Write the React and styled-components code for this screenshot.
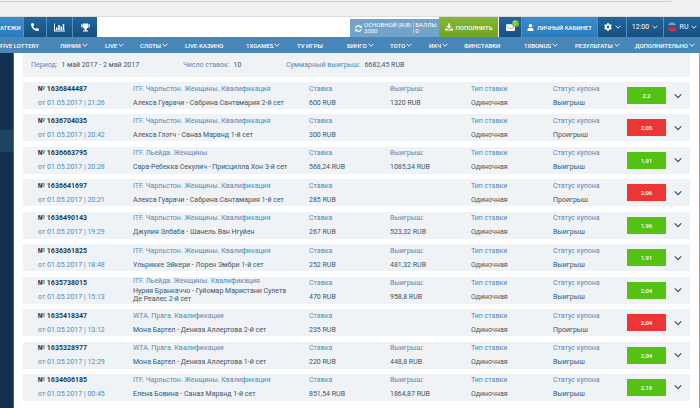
import React from "react";
import styled, { createGlobalStyle } from "styled-components";
import {
  FaPhoneAlt,
  FaTrophy,
  FaUser,
  FaCog,
  FaEnvelope,
  FaSyncAlt,
} from "react-icons/fa";

const GlobalStyle = createGlobalStyle`
  * {
    box-sizing: border-box;
  }
  body {
    margin: 0;
    background: #fff;
    color: #3a5064;
    font-family: Roboto, "Liberation Sans", sans-serif;
    font-size: 7px;
  }
  button {
    margin: 0;
    border: 0;
    padding: 0;
    background: none;
    color: inherit;
    font: inherit;
    cursor: pointer;
  }
  a {
    color: inherit;
    text-decoration: none;
  }
  svg {
    flex-shrink: 0;
  }
`;

const Page = styled.div`
  display: flex;
  flex-direction: column;
  min-height: 100vh;
  overflow: hidden;
`;

const BrowserStrip = styled.div`
  height: 17px;
  background: #f1f1f1;
  border-bottom: 1px solid #dcdcdc;
`;
const AddressEdge = styled.div`
  width: 96%;
  height: 2px;
  border-bottom: 1px solid #d2d2d2;
  border-right: 1px solid #d2d2d2;
  border-radius: 0 0 2px 0;
`;

const Header = styled.header`
  display: flex;
  justify-content: space-between;
  height: 20px;
  color: #fff;
`;
const HeaderGroup = styled.div`
  display: flex;
  align-items: stretch;
`;
const HeaderButton = styled.button`
  display: flex;
  align-items: center;
  justify-content: ${(props) => (props.$start ? "flex-start" : "center")};
  gap: 3px;
  width: ${(props) => props.$width}px;
  white-space: nowrap;
  border-right: 1px solid #5590bd;
  background: ${(props) =>
    props.$light
      ? "linear-gradient(#3a8fd0, #2a7bba)"
      : "linear-gradient(#20679f, #174f7f)"};
  &:last-child {
    border-right: 0;
  }
`;
const SmallCaps = styled.span`
  font-size: 6px;
  font-weight: 500;
`;
const MailBox = styled.span`
  position: relative;
  display: flex;
`;
const MailCount = styled.span`
  position: absolute;
  top: -3px;
  right: -4px;
  width: 7px;
  height: 7px;
  border-radius: 50%;
  background: #7cb82f;
  font-size: 5px;
  line-height: 7px;
  text-align: center;
`;
const Balance = styled.div`
  display: flex;
  align-items: center;
  gap: 2px;
  width: 89px;
  margin-top: 2px;
  padding-left: 5px;
  background: #72a3ca;
  font-size: 6px;
  line-height: 6px;
  white-space: nowrap;
`;
const BalanceItem = styled.div`
  & + & {
    padding-left: 1px;
    border-left: 1px solid #a5c5df;
  }
`;
const Currency = styled.span`
  font-size: 5px;
`;
const TopUp = styled(HeaderButton)`
  background: linear-gradient(#86b833, #6fa426);
  border-right: 1px solid #fff;
`;

const Nav = styled.nav`
  display: grid;
  grid-template-columns: 60fr 45fr 35fr 45fr 61fr 51fr 50fr 43fr 39fr 35fr 60fr 51fr 60fr 65fr;
  align-items: center;
  height: 16px;
  background: #4987b8;
  color: #fff;
`;
const NavLink = styled.a`
  display: flex;
  align-items: center;
  gap: 1px;
  min-width: 0;
  font-weight: 500;
  font-size: 6px;
  white-space: nowrap;
`;

const Body = styled.div`
  display: flex;
  flex: 1;
`;
const Sidebar = styled.aside`
  width: 14px;
  padding-top: 77px;
  background: #10324f;
  border-right: 1px solid #4a6783;
`;
const SidebarItem = styled.div`
  height: 22px;
  background: #1c4462;
`;
const Main = styled.main`
  display: flex;
  flex: 1;
  flex-direction: column;
  gap: 5px;
  min-width: 0;
  padding: 0 9px 7px 9px;
  border-right: 1px solid #8fa3ba;
`;

const Summary = styled.div`
  display: grid;
  grid-template-columns: 152fr 103fr 404fr;
  align-items: center;
  height: 24px;
  padding-left: 8px;
  background: #eff3f6;
`;
const SummaryItem = styled.div`
  display: flex;
  align-items: baseline;
  gap: 4px;
`;
const Label = styled.span`
  color: #5488b8;
  line-height: 9px;
`;
const Value = styled.span`
  color: #3d5366;
  line-height: 8px;
`;

const CouponList = styled.ul`
  display: flex;
  flex: 1;
  flex-direction: column;
  justify-content: space-between;
  margin: 0;
  padding: 0;
  list-style: none;
`;
const Coupon = styled.li`
  display: grid;
  grid-template-columns: 95fr 176fr 81fr 81fr 82fr 74fr 39fr 24fr;
  align-items: center;
  min-height: 27px;
  padding-left: 15px;
  background: #eff3f6;
`;
const Cell = styled.div`
  display: flex;
  flex-direction: column;
  justify-content: space-around;
  align-self: stretch;
  min-width: 0;
  padding-right: ${(props) => (props.$event ? 16 : 0)}px;
`;
const CouponNumber = styled.strong`
  color: #1d3d57;
  font-weight: 700;
  line-height: 9px;
`;
const CouponDate = styled.time`
  color: #5488b8;
  line-height: 8px;
`;
const Odds = styled.div`
  height: 17px;
  background: ${(props) => (props.$won ? "#55c113" : "#ee3535")};
  color: #fff;
  font-size: 6px;
  font-weight: 500;
  line-height: 17px;
  text-align: center;
`;
const Expand = styled.button`
  display: flex;
  align-items: center;
  justify-content: center;
  color: #2d5273;
`;

function Chevron({ size = 6 }) {
  return (
    <svg width={size} height={size} viewBox="0 0 10 10" fill="none" aria-hidden="true">
      <path d="M1 3l4 4 4-4" stroke="currentColor" strokeWidth="1.5" />
    </svg>
  );
}

function ChartIcon() {
  return (
    <svg width="11" height="9" viewBox="0 0 22 18" fill="currentColor" aria-hidden="true">
      <path d="M0 1h2v14h20v2H0z" />
      <path d="M4 9h3v5H4zM8.500 4h3v10h-3zM13 7h3v7h-3zM17.500 2h3v12h-3z" />
    </svg>
  );
}

function DownloadIcon() {
  return (
    <svg width="8" height="8" viewBox="0 0 16 16" fill="currentColor" aria-hidden="true">
      <path d="M6 1h4v5h3.500L8 11.500 2.500 6H6z" />
      <path d="M0 11h4l4 3 4-3h4v4H0z" />
    </svg>
  );
}

function RussianFlag() {
  return (
    <svg width="10" height="10" viewBox="0 0 18 18" aria-hidden="true">
      <clipPath id="flag">
        <circle cx="9" cy="9" r="8" />
      </clipPath>
      <g clipPath="url(#flag)">
        <rect width="18" height="6" fill="#8c9fb3" />
        <rect y="6" width="18" height="6" fill="#2356a8" />
        <rect y="11" width="18" height="7" fill="#e02d33" />
      </g>
    </svg>
  );
}

const navLinks = [
  { title: "FIVE LOTTERY" },
  { title: "ЛИНИЯ", menu: true },
  { title: "LIVE", menu: true },
  { title: "СЛОТЫ", menu: true },
  { title: "LIVE-КАЗИНО" },
  { title: "1XGAMES", menu: true },
  { title: "TV ИГРЫ" },
  { title: "БИНГО", menu: true },
  { title: "ТОТО", menu: true },
  { title: "ИКЧ", menu: true },
  { title: "ФИНСТАВКИ" },
  { title: "1XBONUS", menu: true },
  { title: "РЕЗУЛЬТАТЫ", menu: true },
  { title: "ДОПОЛНИТЕЛЬНО", menu: true },
];

const charleston = "ITF. Чарльстон. Женщины. Квалификация";
const prague = "WTA. Прага. Квалификация";

const coupons = [
  { id: "1636844487", time: "21:26", league: charleston, event: "Алекса Гуарачи - Сабрина Сантамария 2-й сет", stake: "600", win: "1320", odds: "2,2" },
  { id: "1636704035", time: "20:42", league: charleston, event: "Алекса Глэтч - Саназ Маранд 1-й сет", stake: "300", odds: "2,05" },
  { id: "1636663795", time: "20:28", league: "ITF. Льейда. Женщины", event: "Сара-Ребекка Секулич - Присцилла Хон 3-й сет", stake: "568,24", win: "1085,34", odds: "1,91" },
  { id: "1636641697", time: "20:21", league: charleston, event: "Алекса Гуарачи - Сабрина Сантамария 1-й сет", stake: "285", odds: "2,06" },
  { id: "1636490143", time: "19:29", league: charleston, event: "Джулия Элбаба - Шанель Ван Нгуйен", stake: "267", win: "523,32", odds: "1,96" },
  { id: "1636361825", time: "18:48", league: charleston, event: "Ульрикке Эйкери - Лорен Эмбри 1-й сет", stake: "252", win: "481,32", odds: "1,91" },
  { id: "1635738015", time: "15:13", league: "ITF. Льейда. Женщины. Квалификация", event: "Нурия Бранкаччо - Гуйомар Маристани Сулета Де Реалес 2-й сет", stake: "470", win: "958,8", odds: "2,04" },
  { id: "1635418347", time: "13:12", league: prague, event: "Мона Бартел - Дениза Аллертова 2-й сет", stake: "235", odds: "2,04" },
  { id: "1635328977", time: "12:29", league: prague, event: "Мона Бартел - Дениза Аллертова 1-й сет", stake: "220", win: "448,8", odds: "2,04" },
  { id: "1634606185", time: "00:45", league: charleston, event: "Елена Бовина - Саназ Маранд 1-й сет", stake: "851,54", win: "1864,87", odds: "2,19" },
];

function CouponRow({ coupon }) {
  const won = Boolean(coupon.win);
  return (
    <Coupon>
      <Cell>
        <CouponNumber>№ {coupon.id}</CouponNumber>
        <CouponDate>от 01.05.2017 | {coupon.time}</CouponDate>
      </Cell>
      <Cell $event>
        <Label>{coupon.league}</Label>
        <Value>{coupon.event}</Value>
      </Cell>
      <Cell>
        <Label>Ставка</Label>
        <Value>{coupon.stake} RUB</Value>
      </Cell>
      <Cell>
        {won && (
          <>
            <Label>Выигрыш:</Label>
            <Value>{coupon.win} RUB</Value>
          </>
        )}
      </Cell>
      <Cell>
        <Label>Тип ставки</Label>
        <Value>Одиночная</Value>
      </Cell>
      <Cell>
        <Label>Статус купона</Label>
        <Value>{won ? "Выигрыш" : "Проигрыш"}</Value>
      </Cell>
      <Odds $won={won}>{coupon.odds}</Odds>
      <Expand aria-label="Подробнее">
        <Chevron size={8} />
      </Expand>
    </Coupon>
  );
}

export default function App() {
  return (
    <>
      <GlobalStyle />
      <Page>
        <BrowserStrip>
          <AddressEdge />
        </BrowserStrip>
        <Header>
          <HeaderGroup>
            <HeaderButton $width={24} $light $start>
              <SmallCaps>АТЕЖИ</SmallCaps>
            </HeaderButton>
            <HeaderButton $width={23} aria-label="Телефон">
              <FaPhoneAlt size={8} />
            </HeaderButton>
            <HeaderButton $width={26} aria-label="Статистика">
              <ChartIcon />
            </HeaderButton>
            <HeaderButton $width={24} aria-label="Результаты">
              <FaTrophy size={9} />
            </HeaderButton>
          </HeaderGroup>
          <HeaderGroup>
            <Balance>
              <FaSyncAlt size={7} />
              <BalanceItem>
                ОСНОВНОЙ <Currency>(RUB)</Currency>
                <br />
                3300
              </BalanceItem>
              <BalanceItem>
                БАЛЛЫ
                <br />0
              </BalanceItem>
            </Balance>
            <TopUp $width={60}>
              <DownloadIcon />
              <SmallCaps>ПОПОЛНИТЬ</SmallCaps>
            </TopUp>
            <HeaderButton $width={23} aria-label="Сообщения">
              <MailBox>
                <FaEnvelope size={9} />
                <MailCount>1</MailCount>
              </MailBox>
            </HeaderButton>
            <HeaderButton $width={76} $light>
              <FaUser size={7} />
              <SmallCaps>ЛИЧНЫЙ КАБИНЕТ</SmallCaps>
            </HeaderButton>
            <HeaderButton $width={29} aria-label="Настройки">
              <FaCog size={8} />
              <Chevron />
            </HeaderButton>
            <HeaderButton $width={37}>
              12:00
              <Chevron />
            </HeaderButton>
            <HeaderButton $width={36}>
              <RussianFlag />
              RU
              <Chevron />
            </HeaderButton>
          </HeaderGroup>
        </Header>
        <Nav>
          {navLinks.map((link) => (
            <NavLink href="#" key={link.title}>
              {link.title}
              {link.menu && <Chevron />}
            </NavLink>
          ))}
        </Nav>
        <Body>
          <Sidebar>
            <SidebarItem />
          </Sidebar>
          <Main>
            <Summary>
              <SummaryItem>
                <Label>Период:</Label>
                <Value>1 май 2017 - 2 май 2017</Value>
              </SummaryItem>
              <SummaryItem>
                <Label>Число ставок:</Label>
                <Value>10</Value>
              </SummaryItem>
              <SummaryItem>
                <Label>Суммарный выигрыш:</Label>
                <Value>6682,45 RUB</Value>
              </SummaryItem>
            </Summary>
            <CouponList>
              {coupons.map((coupon) => (
                <CouponRow coupon={coupon} key={coupon.id} />
              ))}
            </CouponList>
          </Main>
        </Body>
      </Page>
    </>
  );
}
